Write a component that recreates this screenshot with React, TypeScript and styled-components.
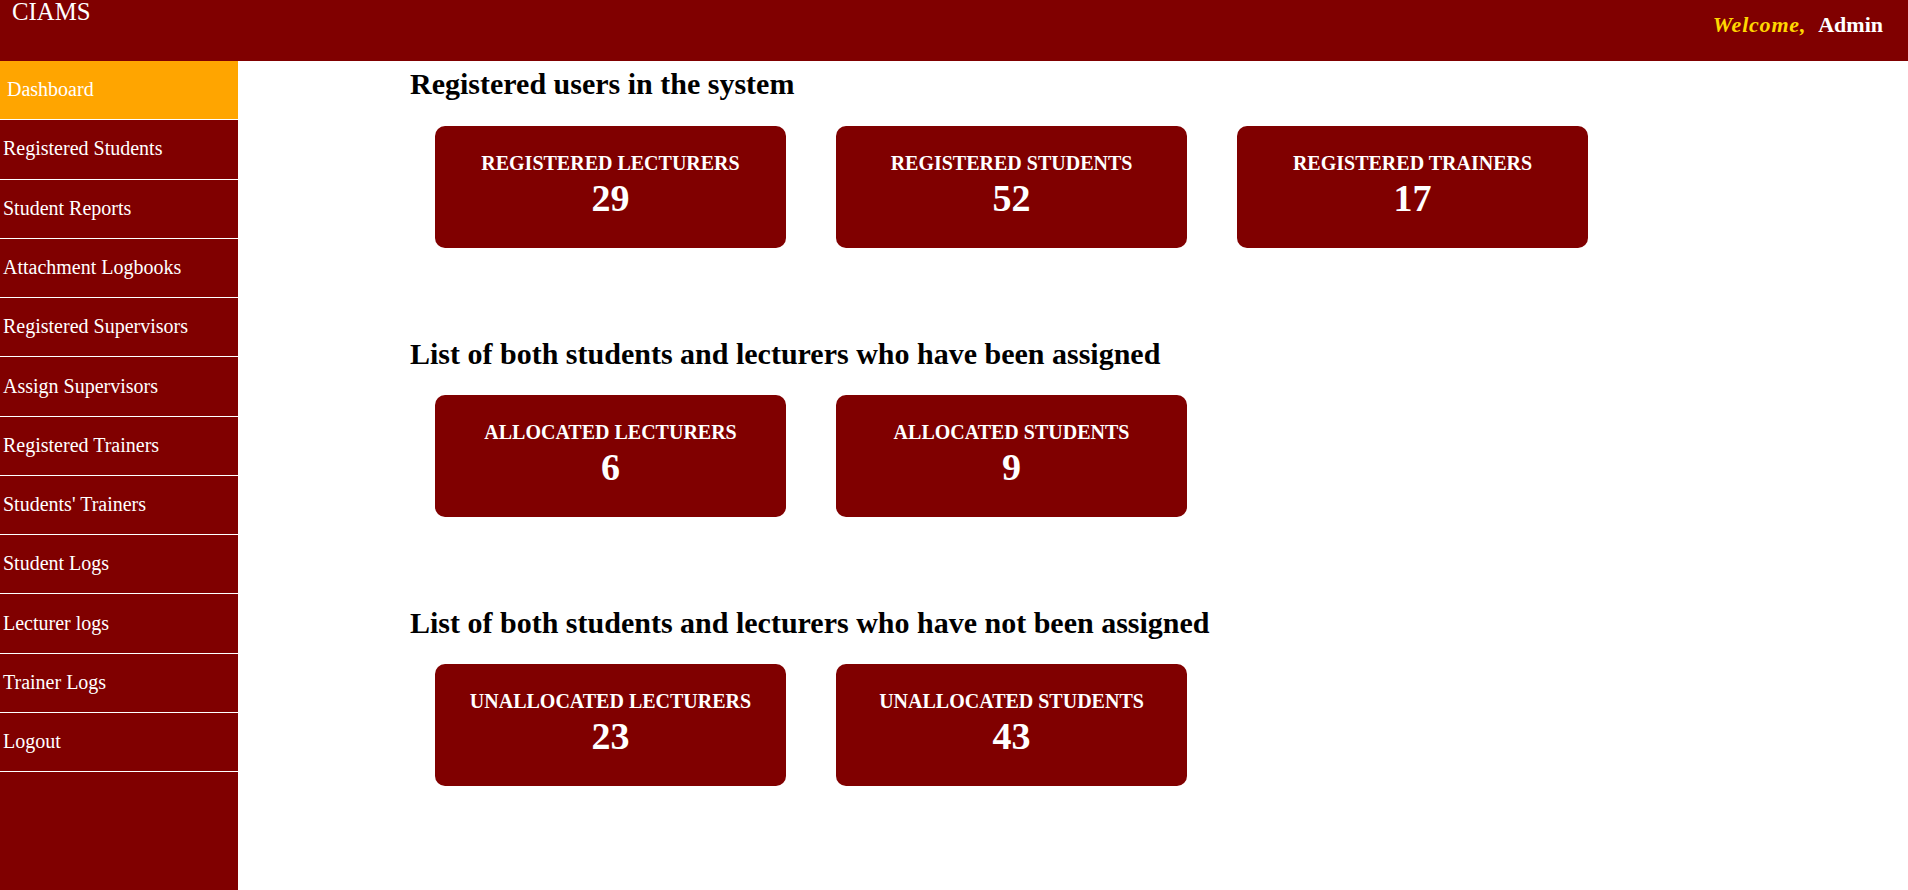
import React from "react";
import styled, { createGlobalStyle } from "styled-components";

const GlobalStyle = createGlobalStyle`
  html, body { margin: 0; padding: 0; background: #ffffff; }
  body { font-family: "Liberation Serif", "Times New Roman", serif; }
  * { box-sizing: border-box; }
`;

const Page = styled.div`
  display: flex;
  flex-direction: column;
  min-height: 100vh;
`;

const Header = styled.header`
  height: 61px;
  background: #800000;
  display: flex;
  justify-content: space-between;
  align-items: flex-start;
  padding: 0 25px 0 12px;
  flex-shrink: 0;
`;

const Brand = styled.div`
  color: #ffffff;
  font-size: 24.8px;
  line-height: 24px;
`;

const Welcome = styled.div`
  padding-top: 14.3px;
  font-size: 22px;
  line-height: 22px;
  font-weight: bold;
  display: flex;
`;

const Greeting = styled.span`
  color: #ffd700;
  font-style: italic;
  letter-spacing: 0.8px;
`;

const UserName = styled.span`
  color: #ffffff;
  margin-left: 12px;
`;

const Body = styled.div`
  flex: 1;
  display: flex;
`;

const Sidebar = styled.nav`
  width: 238px;
  flex-shrink: 0;
  background: #800000;
  display: flex;
  flex-direction: column;
`;

const NavItem = styled.a<{ $active?: boolean }>`
  display: block;
  height: 59.27px;
  border-bottom: 1px solid #ffffff;
  padding: 17.2px 0 0 ${(p) => (p.$active ? "7px" : "3px")};
  background: ${(p) => (p.$active ? "#ffa500" : "#800000")};
  color: #ffffff;
  font-size: 20px;
  line-height: 23px;
  text-decoration: none;
  white-space: nowrap;
`;

const Main = styled.main`
  flex: 1;
  padding: 6.4px 0 0 172px;
  display: flex;
  flex-direction: column;
  gap: 89px;
`;

const Section = styled.section`
  display: flex;
  flex-direction: column;
`;

const Heading = styled.h2`
  margin: 0 0 24.3px 0;
  font-size: 30px;
  line-height: 34px;
  font-weight: bold;
  color: #000000;
`;

const CardRow = styled.div`
  display: flex;
  gap: 50px;
  padding-left: 25px;
`;

const Card = styled.div`
  width: 351px;
  height: 122px;
  background: #800000;
  border-radius: 10px;
  color: #ffffff;
  display: flex;
  flex-direction: column;
  align-items: center;
  padding-top: 26px;
`;

const CardTitle = styled.div`
  font-size: 20px;
  line-height: 23px;
  font-weight: bold;
  text-transform: uppercase;
`;

const CardValue = styled.div`
  margin-top: 2px;
  font-size: 38px;
  line-height: 43px;
  font-weight: bold;
`;

const navItems = [
  "Dashboard",
  "Registered Students",
  "Student Reports",
  "Attachment Logbooks",
  "Registered Supervisors",
  "Assign Supervisors",
  "Registered Trainers",
  "Students' Trainers",
  "Student Logs",
  "Lecturer logs",
  "Trainer Logs",
  "Logout",
];

const sections = [
  {
    title: "Registered users in the system",
    cards: [
      { label: "Registered Lecturers", value: 29 },
      { label: "Registered Students", value: 52 },
      { label: "Registered Trainers", value: 17 },
    ],
  },
  {
    title: "List of both students and lecturers who have been assigned",
    cards: [
      { label: "Allocated Lecturers", value: 6 },
      { label: "Allocated Students", value: 9 },
    ],
  },
  {
    title: "List of both students and lecturers who have not been assigned",
    cards: [
      { label: "Unallocated Lecturers", value: 23 },
      { label: "Unallocated Students", value: 43 },
    ],
  },
];

export default function App() {
  return (
    <>
      <GlobalStyle />
      <Page>
        <Header>
          <Brand>CIAMS</Brand>
          <Welcome>
            <Greeting>Welcome,</Greeting>
            <UserName>Admin</UserName>
          </Welcome>
        </Header>
        <Body>
          <Sidebar>
            {navItems.map((item, i) => (
              <NavItem key={item} href="#" $active={i === 0}>
                {item}
              </NavItem>
            ))}
          </Sidebar>
          <Main>
            {sections.map((s) => (
              <Section key={s.title}>
                <Heading>{s.title}</Heading>
                <CardRow>
                  {s.cards.map((c) => (
                    <Card key={c.label}>
                      <CardTitle>{c.label}</CardTitle>
                      <CardValue>{c.value}</CardValue>
                    </Card>
                  ))}
                </CardRow>
              </Section>
            ))}
          </Main>
        </Body>
      </Page>
    </>
  );
}
